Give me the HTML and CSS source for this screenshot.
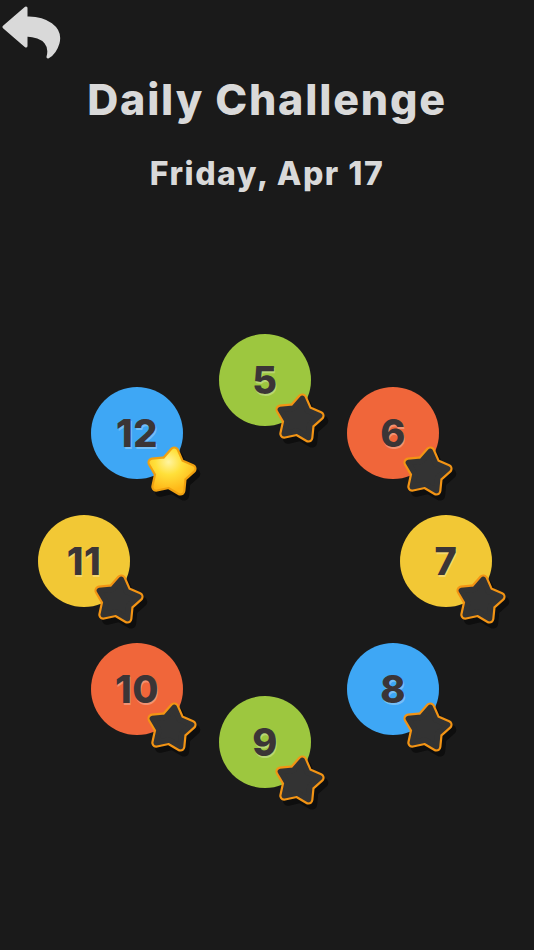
FILE: index.html
```html
<!DOCTYPE html>
<html lang="en">
<head>
    <meta charset="UTF-8">
    <meta name="viewport" content="width=device-width, initial-scale=1.0">
    <title>Daily Challenge</title>
    <link rel="stylesheet" href="styles.css">
</head>
<body>

    <!-- shared star shape -->
    <svg class="defs" width="0" height="0" aria-hidden="true">
        <defs>
            <polygon id="star-shape" points="0,-19 6.47,-8.9 18.07,-5.87 10.46,3.4 11.17,15.37 0,11 -11.17,15.37 -10.46,3.4 -18.07,-5.87 -6.47,-8.9"/>
            <radialGradient id="gold" cx="0.4" cy="0.3" r="0.75">
                <stop offset="0" stop-color="#fff4a0"/>
                <stop offset="0.45" stop-color="#ffe03a"/>
                <stop offset="1" stop-color="#ffb818"/>
            </radialGradient>
        </defs>
    </svg>

    <div class="screen">
        <header class="topbar">
            <button class="back" aria-label="Back">
                <svg viewBox="0 0 62 60" width="62" height="60">
                    <path d="M4 27 L26 8 L26 18 C46 17 62 28 58 43 C56 50 53 54 48 57 C51 46 46 36 26 35 L26 46 Z" fill="#d9d9d9" stroke="#d9d9d9" stroke-width="3" stroke-linejoin="round"/>
                </svg>
            </button>
        </header>

        <h1 class="title">Daily Challenge</h1>
        <h2 class="date">Friday, Apr 17</h2>

        <div class="ring">
            <div class="level green slot-1"><span>5</span>
                <svg class="star" viewBox="-30 -30 60 60"><g class="dark"><use href="#star-shape" class="shadow"/><use href="#star-shape" class="rim"/><use href="#star-shape" class="body"/></g></svg>
            </div>
            <div class="level orange slot-2"><span>6</span>
                <svg class="star" viewBox="-30 -30 60 60"><g class="dark"><use href="#star-shape" class="shadow"/><use href="#star-shape" class="rim"/><use href="#star-shape" class="body"/></g></svg>
            </div>
            <div class="level yellow slot-3"><span>7</span>
                <svg class="star" viewBox="-30 -30 60 60"><g class="dark"><use href="#star-shape" class="shadow"/><use href="#star-shape" class="rim"/><use href="#star-shape" class="body"/></g></svg>
            </div>
            <div class="level blue slot-4"><span>8</span>
                <svg class="star" viewBox="-30 -30 60 60"><g class="dark"><use href="#star-shape" class="shadow"/><use href="#star-shape" class="rim"/><use href="#star-shape" class="body"/></g></svg>
            </div>
            <div class="level green slot-5"><span>9</span>
                <svg class="star" viewBox="-30 -30 60 60"><g class="dark"><use href="#star-shape" class="shadow"/><use href="#star-shape" class="rim"/><use href="#star-shape" class="body"/></g></svg>
            </div>
            <div class="level orange slot-6"><span>10</span>
                <svg class="star" viewBox="-30 -30 60 60"><g class="dark"><use href="#star-shape" class="shadow"/><use href="#star-shape" class="rim"/><use href="#star-shape" class="body"/></g></svg>
            </div>
            <div class="level yellow slot-7"><span>11</span>
                <svg class="star" viewBox="-30 -30 60 60"><g class="dark"><use href="#star-shape" class="shadow"/><use href="#star-shape" class="rim"/><use href="#star-shape" class="body"/></g></svg>
            </div>
            <div class="level blue slot-8"><span>12</span>
                <svg class="star" viewBox="-30 -30 60 60"><g class="won"><use href="#star-shape" class="shadow"/><use href="#star-shape" class="rim"/><use href="#star-shape" class="body"/></g></svg>
            </div>
        </div>
    </div>

</body>
</html>
```

FILE: styles.css
```css
* {
    box-sizing: border-box;
    margin: 0;
    padding: 0;
}

body, html {
    height: 100%;
    background: #1a1a1a;
    font-family: 'Inter', 'Open Sans', sans-serif;
    overflow: hidden;
}

.defs {
    position: absolute;
}

.screen {
    width: 534px;
    height: 950px;
    display: flex;
    flex-direction: column;
    align-items: center;
}

.topbar {
    width: 100%;
    height: 60px;
    display: flex;
    align-items: flex-start;
}

.back {
    background: none;
    border: none;
    cursor: pointer;
    width: 62px;
    height: 60px;
    display: block;
}

.back svg {
    display: block;
}

.title {
    margin-top: 14px;
    font-size: 43px;
    line-height: 50px;
    font-weight: 800;
    color: #d9d9d9;
    letter-spacing: 1.8px;
}

.date {
    margin-top: 30px;
    font-size: 32px;
    line-height: 40px;
    font-weight: 800;
    color: #d9d9d9;
    letter-spacing: 1.5px;
}

/* Level ring */
.ring {
    position: relative;
    width: 534px;
    height: 540px;
    margin-top: 106px;
}

.level {
    position: absolute;
    width: 92px;
    height: 92px;
    border-radius: 50%;
    display: flex;
    justify-content: center;
    align-items: center;
}

.level span {
    font-size: 38px;
    font-weight: 800;
    color: #3b3536;
    text-shadow: 1px 1.5px 0 rgba(255, 255, 255, 0.28);
    letter-spacing: 0.5px;
}

.green  { background: #9dc73f; }
.orange { background: #f0663a; }
.yellow { background: #f2c835; }
.blue   { background: #3ea7f5; }

.slot-1 { left: 219px; top: 34px; }
.slot-2 { left: 347px; top: 87px; }
.slot-3 { left: 400px; top: 215px; }
.slot-4 { left: 347px; top: 343px; }
.slot-5 { left: 219px; top: 396px; }
.slot-6 { left: 91px;  top: 343px; }
.slot-7 { left: 38px;  top: 215px; }
.slot-8 { left: 91px;  top: 87px; }

/* Star badge */
.star {
    position: absolute;
    left: 50px;
    top: 55px;
    width: 60px;
    height: 60px;
    overflow: visible;
}

.star g {
    transform: rotate(9deg) scale(1.1);
}

.star use {
    stroke-linejoin: round;
}

.star .shadow {
    fill: #0c0c0c;
    stroke: #0c0c0c;
    stroke-width: 9;
    transform: translate(4px, 4px);
    opacity: 0.85;
}

.dark .rim {
    fill: #f39414;
    stroke: #f39414;
    stroke-width: 9;
}

.dark .body {
    fill: #333333;
    stroke: #333333;
    stroke-width: 5;
}

.won .rim {
    fill: #f0a010;
    stroke: #f0a010;
    stroke-width: 9;
}

.won .body {
    fill: url(#gold);
    stroke: url(#gold);
    stroke-width: 5;
}
```
